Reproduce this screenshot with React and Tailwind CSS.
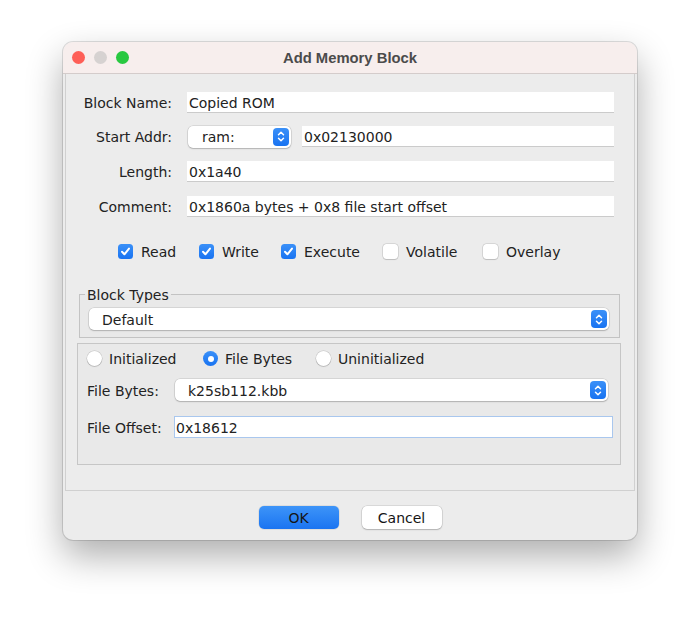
import React from "react";

const BODY = "font-['DejaVu_Sans',sans-serif] text-[14px] text-[#222222]";

function Stepper({ className = "" }) {
  return (
    <span
      className={`flex h-[18px] w-[16px] shrink-0 items-center justify-center rounded-[4px] bg-gradient-to-b from-[#3a90f8] to-[#1873f1] ${className}`}
    >
      <svg width="8" height="13" viewBox="0 0 8 13" fill="none" stroke="white" strokeWidth="1.5" strokeLinecap="round" strokeLinejoin="round">
        <path d="M1.5 4.8 L4 2.3 L6.5 4.8" />
        <path d="M1.5 8.2 L4 10.7 L6.5 8.2" />
      </svg>
    </span>
  );
}

function Combo({ value, className = "", textPad = "pl-[14px]" }) {
  return (
    <div
      className={`flex h-[22px] items-center rounded-[5px] bg-white pr-[2px] shadow-[0_0_0_0.5px_rgba(0,0,0,0.16),0_1px_1.5px_rgba(0,0,0,0.18)] ${className}`}
    >
      <span className={`flex-1 truncate pt-[2px] ${textPad}`}>{value}</span>
      <Stepper />
    </div>
  );
}

function Field({ value, className = "" }) {
  return (
    <div className={`flex h-[21px] items-center border-b border-[#cbcbcb] bg-white pl-[2px] pt-[2px] ${className}`}>
      {value}
    </div>
  );
}

function Check({ label, checked, className = "" }) {
  return (
    <label className={`flex items-center gap-[8px] ${className}`}>
      {checked ? (
        <span className="flex h-[15px] w-[15px] items-center justify-center rounded-[3.5px] bg-gradient-to-b from-[#3a90f8] to-[#1873f1]">
          <svg width="15" height="15" viewBox="0 0 15 15" fill="none" stroke="white" strokeWidth="2" strokeLinecap="round" strokeLinejoin="round">
            <path d="M4 7.8 L6.4 10.3 L11 4.6" />
          </svg>
        </span>
      ) : (
        <span className="h-[15px] w-[15px] rounded-[3.5px] bg-white shadow-[0_0_0_0.5px_rgba(0,0,0,0.18),0_1px_1px_rgba(0,0,0,0.12)]" />
      )}
      <span className="pt-[1px]">{label}</span>
    </label>
  );
}

function Radio({ label, selected, className = "" }) {
  return (
    <label className={`flex items-center gap-[7px] ${className}`}>
      {selected ? (
        <span className="flex h-[15px] w-[15px] items-center justify-center rounded-full bg-gradient-to-b from-[#3a90f8] to-[#1873f1]">
          <span className="h-[6px] w-[6px] rounded-full bg-white" />
        </span>
      ) : (
        <span className="h-[15px] w-[15px] rounded-full bg-white shadow-[0_0_0_0.5px_rgba(0,0,0,0.18),0_1px_1px_rgba(0,0,0,0.12)]" />
      )}
      <span className="pt-[1px]">{label}</span>
    </label>
  );
}

function Row({ label, children, className = "" }) {
  return (
    <div className={`flex h-[21px] items-center ${className}`}>
      <span className="w-[106px] shrink-0 pt-[2px] text-right">{label}</span>
      {children}
    </div>
  );
}

export default function App() {
  return (
    <div className={`min-h-[623px] w-[700px] bg-white pl-[63px] pt-[42px] ${BODY}`}>
      <div className="flex h-[498px] w-[574px] flex-col overflow-hidden rounded-[10px] bg-[#ececec] shadow-[0_0_0_1px_rgba(0,0,0,0.12),0_16px_36px_rgba(0,0,0,0.32)]">
        {/* title bar */}
        <div className="grid h-[32px] shrink-0 grid-cols-[1fr_auto_1fr] items-center border-b border-[#d4cccb] bg-[#f7eeed]">
          <div className="flex items-center gap-[9px] pl-[9px]">
            <span className="h-[13px] w-[13px] rounded-full bg-[#fe5f57]" />
            <span className="h-[13px] w-[13px] rounded-full bg-[#d6d2d1]" />
            <span className="h-[13px] w-[13px] rounded-full bg-[#28c840]" />
          </div>
          <span className="pt-[1px] font-['Liberation_Sans',sans-serif] text-[14.8px] font-bold text-[#4b4b4b]">
            Add Memory Block
          </span>
          <div />
        </div>

        {/* work panel */}
        <div className="mx-[2px] flex h-[417px] shrink-0 flex-col border-x border-b border-[#d0d0d0] pt-[18px]">
          <Row label="Block Name:">
            <Field value="Copied ROM" className="ml-[15px] mr-[20px] flex-1" />
          </Row>
          <Row label="Start Addr:" className="mt-[13px]">
            <Combo value="ram:" className="ml-[16px] h-[21px] w-[103px]" textPad="pl-[14px]" />
            <Field value="0x02130000" className="ml-[11px] mr-[20px] flex-1" />
          </Row>
          <Row label="Length:" className="mt-[14px]">
            <Field value="0x1a40" className="ml-[15px] mr-[20px] flex-1" />
          </Row>
          <Row label="Comment:" className="mt-[14px]">
            <Field value="0x1860a bytes + 0x8 file start offset" className="ml-[15px] mr-[20px] flex-1" />
          </Row>

          <div className="mt-[27px] flex h-[15px] items-center pl-[52px]">
            <Check label="Read" checked className="w-[81px]" />
            <Check label="Write" checked className="w-[82px]" />
            <Check label="Execute" checked className="w-[102px]" />
            <Check label="Volatile" className="w-[100px]" />
            <Check label="Overlay" />
          </div>

          <fieldset className="ml-[13px] mr-[14px] mt-[26px] border border-[#c3c3c3] bg-[#e9e9e9] pb-[7px]">
            <legend className="ml-[5px] h-[18px] px-[2px] pt-[1px] leading-[18px]">Block Types</legend>
            <Combo value="Default" className="ml-[9px] mr-[10px] mt-[5px]" textPad="pl-[13px]" />
          </fieldset>

          <div className="ml-[11px] mr-[13px] mt-[5px] flex h-[122px] flex-col border border-[#c6c6c6] bg-[#e9e9e9] pl-[9px] pt-[7px]">
            <div className="flex h-[15px] items-center">
              <Radio label="Initialized" className="w-[116px]" />
              <Radio label="File Bytes" selected className="w-[113px]" />
              <Radio label="Uninitialized" />
            </div>
            <div className="mt-[13px] flex h-[22px] items-center">
              <span className="w-[88px] shrink-0 pt-[2px]">File Bytes:</span>
              <Combo value="k25sb112.kbb" className="mr-[12px] flex-1" textPad="pl-[13px]" />
            </div>
            <div className="mt-[15px] flex h-[22px] items-center">
              <span className="w-[87px] shrink-0 pt-[2px]">File Offset:</span>
              <div className="mr-[7px] flex h-[22px] flex-1 items-center border border-[#a9c7ee] bg-white pl-[1px] pt-[2px]">
                0x18612
              </div>
            </div>
          </div>
        </div>

        {/* buttons */}
        <div className="flex flex-1 justify-center gap-[23px] pt-[15px]">
          <button
            type="button"
            className="h-[23px] w-[80px] rounded-[5px] bg-gradient-to-b from-[#3d94f8] to-[#1a74f1] pt-[1px] text-[#151515] shadow-[0_0_0_0.5px_rgba(0,0,0,0.12)]"
          >
            OK
          </button>
          <button
            type="button"
            className="h-[23px] w-[80px] rounded-[5px] bg-white pt-[1px] text-[#151515] shadow-[0_0_0_0.5px_rgba(0,0,0,0.16),0_1px_1.5px_rgba(0,0,0,0.18)]"
          >
            Cancel
          </button>
        </div>
      </div>
    </div>
  );
}
